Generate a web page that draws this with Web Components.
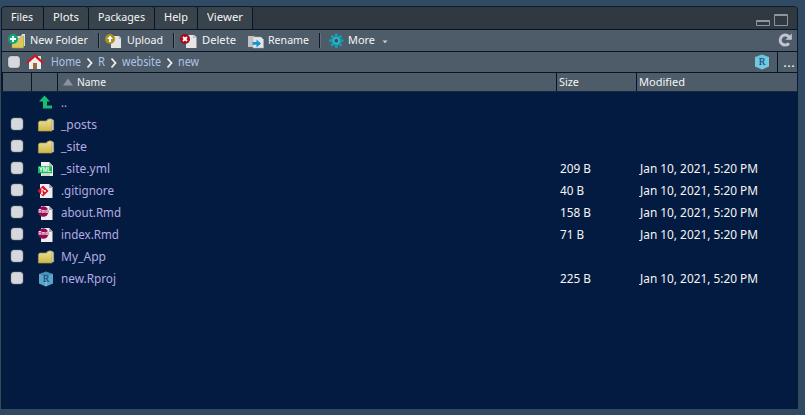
<!DOCTYPE html>
<html lang="en"><head><meta charset="utf-8"><title>Files</title>
<style>
html,body{margin:0;height:100%;background:#304a63;overflow:hidden}
body{font:12px/16px "Noto Sans","Open Sans",sans-serif;color:#f4f5f6}
</style></head><body>
<files-pane></files-pane>
<script>
const icons={
newfolder:['0 0 18 16','<path d="M8 4l2-1h3l1-2h3v12H8z" fill="#d9dadb"/><path d="M4 6h7l3-2.5h1.5V15H4z" fill="#d8c95c" stroke="#a99a39" stroke-width=".6"/><circle cx="5" cy="6" r="5" fill="#12a57b"/><path d="M5 3v6M2 6h6" stroke="#fff" stroke-width="1.8"/>'],
upload:['0 0 18 16','<path d="M6 3h8l2 2v10H6z" fill="#e4e4e4"/><path d="M14 3v3h2" fill="#b5b7b9"/><circle cx="5" cy="6" r="5" fill="#a7911c"/><path d="M5 2.5 8 6H6v3H4V6H2z" fill="#fff"/>'],
del:['0 0 18 16','<path d="M6 2h8l2.5 2v11H6z" fill="#e5e5e5"/><path d="M13 2v3h3" fill="#b5b7b9"/><circle cx="5" cy="6" r="5" fill="#a60b19"/><path d="m3 4 4 4m0-4L3 8" stroke="#fff" stroke-width="1.8"/>'],
rename:['0 0 18 16','<path d="M0 3h6l3 3v8H0z" fill="#bfc3c6"/><path d="M5 4h8l2.5 2.5V15H5z" fill="#e3e4e5" stroke="#aab0b5" stroke-width=".5"/><path d="M4.500 9h4V6.500L13 10.500 8.500 14.500v-2.700h-4z" fill="#1495d2"/>'],
gear:['0 0 16 16','<g fill="#159db4" transform="translate(.3 .5) scale(.9)"><g id="g"><path d="M6.500 0h2.600l.5 4h-3.600zM6 12h3.600l-.5 4h-2.600z"/></g><use href="#g" transform="rotate(45 7.8 8)"/><use href="#g" transform="rotate(90 7.8 8)"/><use href="#g" transform="rotate(135 7.8 8)"/><circle cx="7.8" cy="8" r="5.500"/><circle cx="7.8" cy="8" r="3.600" fill="#3fbac8"/><circle cx="7.8" cy="8" r="2.200" fill="#34525f"/></g>'],
home:['0 0 18 16','<path d="M3 7 9 2l6 5v8H3z" fill="#eee"/><path d="M12 2h3v4h-3z" fill="#ddd"/><path d="M7 9h4v6H7z" fill="#9b6a3c"/><path d="m1 9 8-7.3L17 9" fill="none" stroke="#d4141c" stroke-width="2.2"/>'],
up:['0 0 16 16','<path d="M6.500 .5 12 6.500H9V10.500H14v3H5v-7H1z" fill="#15bf72"/>'],
folder:['0 0 16 14','<path d="M8 3l2-2h4l1.700 1.500V12H8z" fill="#e3e3df" stroke="#8f9294" stroke-width=".5"/><path d="M.4 4.500 1.500 3H9l2-2h2l1 1v11H.4z" fill="url(#f)" stroke="#a99b48" stroke-width=".7"/><defs><linearGradient id="f" x2="0" y2="1"><stop stop-color="#e9e1a0"/><stop offset="1" stop-color="#d1b744"/></linearGradient></defs>'],
yml:['0 0 16 16','<path d="M3 1h8l4 4v10H3z" fill="#eef0ee"/><path d="M11 1v4h4" fill="#b7bfba"/><path d="M0 5.300h14v7H0z" fill="#12b958"/><path d="M4 14h8" stroke="#a8b9ad"/><text x="7" y="11.4" text-anchor="middle" font-family="Liberation Sans,sans-serif" font-size="6.7" font-weight="700" textLength="12" lengthAdjust="spacingAndGlyphs" fill="#fff">YML</text>'],
git:['0 0 16 16','<path d="M2 1h9l3.500 3.500V15H2z" fill="#eee"/><path d="M11 1v4h4" fill="#a7a8b2"/><path d="m5 2.500 5.500 5.500L5 13.500-.5 8z" fill="#d7152b"/><path d="M4 5v6M4 6l3 2" stroke="#fff" stroke-width="1"/><circle cx="4" cy="10.5" r="1" fill="#fff"/><circle cx="7" cy="8" r="1" fill="#fff"/>'],
rmd:['0 0 16 16','<path d="M3 1h8l3.500 3.500V15H3z" fill="#eee"/><path d="M11 1v4h4" fill="#a7a8b2"/><circle cx="5.3" cy="6.5" r="5.2" fill="#950c52"/><text x="5.3" y="8.4" text-anchor="middle" font-family="Liberation Sans,sans-serif" font-size="5" font-weight="700" textLength="9.4" lengthAdjust="spacingAndGlyphs" fill="#fff">Rmd</text>'],
proj:['0 0 16 16','<path d="M8 .5 15 3v9.500L8 15.500 1 12.500V3z" fill="var(--cube,#4690b6)"/><path d="M1 3l7 2.500L15 3v9.500L8 15.500 1 12.500z" fill="#8ad4ea" opacity=".3"/><path d="M8 11v4" stroke="#7bd0e6"/><text x="8" y="10.7" text-anchor="middle" font-family="Liberation Serif,serif" font-size="10" fill="#164e87" stroke="#164e87" stroke-width=".2">R</text>'],
sort:['0 0 10 8','<path d="M5 .5 10 7.500H0z" fill="#8b919f"/>'],
chev:['0 0 8 12','<path d="m1.500 1.500 4 4.500-4 4.500" fill="none" stroke="#eceeef" stroke-width="1.8"/>'],
caret:['0 0 6 4','<path d="M.5.5h5L3 3.300z" fill="#cdd1d5"/>'],
min:['0 0 14 6','<path d="M.5.5h13v5H.5zM1 1.500h12" fill="#303941" stroke="#8d969e"/>'],
max:['0 0 14 12','<path d="M.5.5h13v11H.5z" fill="#303941" stroke="#8d969e"/><path d="M1 1.500h12" stroke="#8d969e"/>'],
reload:['0 0 14 14','<path d="M11 10.300a5 5 0 1 1 .1-6.400" fill="none" stroke="#bfc4d0" stroke-width="3"/><path d="M13.800.5v6.300H7.400z" fill="#bfc4d0"/>']
};
class Base extends HTMLElement{
 constructor(){super();this.attachShadow({mode:'open'})}
 connectedCallback(){this.shadowRoot.innerHTML=this.view();this.after_?.()}
}
class UiIcon extends Base{view(){
 const [b,c]=icons[this.getAttribute('name')],[,,w,h]=b.split(' ');
 return `<style>:host{display:block;flex:none}svg{display:block;overflow:visible}</style><svg width="${w}" height="${h}" viewBox="${b}">${c}</svg>`}}
/* Label whose text is condensed or widened to occupy the width given in "w". */
class UiLabel extends Base{
 view(){return `<style>:host{display:block;flex:none;white-space:nowrap;width:${this.getAttribute('w')}px}span{display:inline-block;transform-origin:0 50%}</style><span>${this.textContent}</span>`}
 after_(){const s=this.shadowRoot.querySelector('span');
  s.style.transform=`scaleX(${this.getAttribute('w')/s.getBoundingClientRect().width})`}}
class UiCheck extends Base{view(){return `<style>:host{display:block;flex:none;box-sizing:border-box;width:12px;height:12px;border-radius:3px;background:#d5d9df;border:1px solid #c0c5cb;box-shadow:0 0 0 .5px #424c55}</style>`}}
class PaneTabs extends Base{view(){
 const t=[['Files',22,41],['Plots',26,44],['Packages',47,65],['Help',24,42],['Viewer',36,54]];
 return `<style>:host{display:flex;background:#303941;height:22px;border-bottom:1px solid #061626;font-size:11px}
 .t{box-sizing:border-box;height:22px;padding:2px 0 0 9px;background:#38434c;border-right:1px solid #061626;border-radius:3px 3px 0 0}
 .t:first-child{background:#4e5b68;height:23px}
 .w{margin-left:auto;display:flex;gap:4px;align-items:flex-end;padding:0 9px 3px 0}</style>`+
 t.map(([n,w,b])=>`<div class="t" style="width:${b+1}px"><ui-label w="${w}">${n}</ui-label></div>`).join('')+
 '<div class="w"><ui-icon name="min"></ui-icon><ui-icon name="max"></ui-icon></div>'}}
class ToolAction extends Base{view(){return `<style>:host{display:flex;align-items:center}ui-icon{width:var(--slot,22px)}ui-label{margin-bottom:2px}</style><ui-icon name="${this.getAttribute('icon')}"></ui-icon><ui-label w="${this.getAttribute('w')}">${this.textContent}</ui-label>`}}
class PaneTools extends Base{view(){return `<style>:host{display:flex;align-items:center;height:21px;background:#4e5b68;border-bottom:1px solid #061626;font-size:11px;padding:0 5px 0 6px}
 i{width:1px;height:15px;background:#101820;border-right:1px solid #63707c;margin:0 5px 0 10px}.r{margin:0 0 1px auto}</style>
 <tool-action icon="newfolder" w="58">New Folder</tool-action><i></i>
 <tool-action icon="upload" w="36">Upload</tool-action><i></i>
 <tool-action icon="del" w="34">Delete</tool-action>
 <tool-action icon="rename" w="41" style="--slot:20px;margin-left:12px">Rename</tool-action><i style="margin-right:8px"></i>
 <tool-action icon="gear" w="27" style="--slot:19px">More</tool-action><ui-icon name="caret" style="margin:3px 0 0 7px"></ui-icon>
 <ui-icon class="r" name="reload"></ui-icon>`}}
class PanePath extends Base{view(){return `<style>:host{display:flex;align-items:center;height:20px;background:#4e5b68;border-bottom:1px solid #061626;color:#acc5e5;padding-left:6px}
 nav{display:flex;align-items:center;margin-left:7px;font-size:12px}nav ui-icon{margin:1px 4px 0 5px}.p{margin-left:auto;--cube:#67c5dc}
 .m{box-sizing:border-box;width:20px;height:20px;border-left:1px solid #061626;margin-left:7px;padding:3px 0 0 5px;color:#eee}</style>
 <ui-check></ui-check><ui-icon name="home" style="margin-left:6px"></ui-icon>
 <nav><ui-label w="30">Home</ui-label><ui-icon name="chev"></ui-icon><ui-label w="7">R</ui-label><ui-icon name="chev"></ui-icon><ui-label w="39">website</ui-label><ui-icon name="chev"></ui-icon><ui-label w="21">new</ui-label></nav>
 <ui-icon class="p" name="proj"></ui-icon><div class="m"><ui-label w="12">...</ui-label></div>`}}
class FileHeader extends Base{view(){return `<style>:host{display:grid;grid-template-columns:29px 26px 499px 80px 1fr;height:18px;background:#4e5b68;border-bottom:1px solid #17293c;font-size:11px}
 div{display:flex;align-items:center;border-left:1px solid #061626;padding-left:2px}div:first-child{border:0}.n{padding-left:5px;gap:4px}</style>
 <div></div><div></div><div class="n"><ui-icon name="sort"></ui-icon><ui-label w="29">Name</ui-label></div><div><ui-label w="20">Size</ui-label></div><div><ui-label w="46">Modified</ui-label></div>`}}
class FileRow extends Base{view(){const a=n=>this.getAttribute(n),s=a('size');
 return `<style>:host{display:grid;grid-template-columns:27px 32px 499px 80px 1fr;align-items:center;height:22px}
 ui-check{margin:0 0 2px 8.5px}.i{display:flex;justify-content:center;width:18px;padding:0 0 1px 7.5px}.n{color:#b4aae2}</style>
 <div>${a('icon')=='up'?'':'<ui-check></ui-check>'}</div><div class="i"><ui-icon name="${a('icon')}"></ui-icon></div>
 <ui-label class="n" w="${a('w')}">${a('name')}</ui-label>`+(s?`<ui-label w="${a('sw')}">${s}</ui-label><ui-label w="118">Jan 10, 2021, 5:20 PM</ui-label>`:'')}}
class FilesPane extends Base{view(){
 const r=[['..','up',6],['_posts','folder',36],['_site','folder',26],['_site.yml','yml',49,'209 B',31],['.gitignore','git',53,'40 B',24],['about.Rmd','rmd',60,'158 B',31],['index.Rmd','rmd',58,'71 B',24],['My_App','folder',45],['new.Rproj','proj',55,'225 B',31]];
 return `<style>:host{display:flex;flex-direction:column;box-sizing:border-box;height:403px;width:797px;margin:6px 0 0 1px;border:1px solid #091b2d;border-radius:4px 4px 0 0;background:#031b40;overflow:hidden}
 </style><pane-tabs></pane-tabs><pane-tools></pane-tools><pane-path></pane-path><file-header></file-header><main>`+
 r.map(([n,i,w,s='',sw=0])=>`<file-row name="${n}" icon="${i}" w="${w}" size="${s}" sw="${sw}"></file-row>`).join('')+'</main>'}}
customElements.define('ui-icon',UiIcon);customElements.define('ui-label',UiLabel);customElements.define('ui-check',UiCheck);
customElements.define('pane-tabs',PaneTabs);customElements.define('tool-action',ToolAction);customElements.define('pane-tools',PaneTools);
customElements.define('pane-path',PanePath);customElements.define('file-header',FileHeader);customElements.define('file-row',FileRow);
customElements.define('files-pane',FilesPane);
</script></body></html>
